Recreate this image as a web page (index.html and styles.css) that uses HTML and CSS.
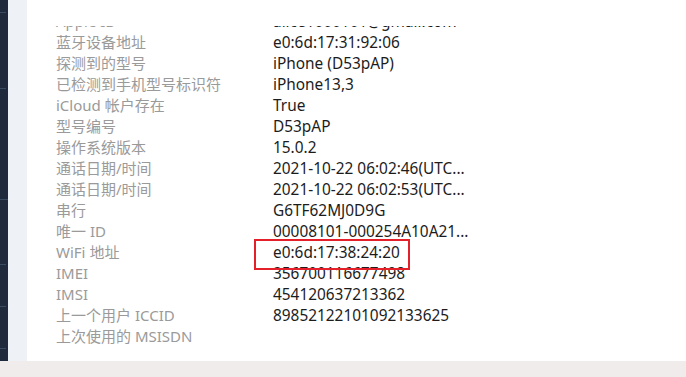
FILE: index.html
```html
<!DOCTYPE html>
<html lang="zh-CN">
<head>
<meta charset="utf-8">
<link rel="stylesheet" href="styles.css">
<title>设备信息</title>
</head>
<body>
<div class="app">
  <div class="main">
    <nav class="sidebar">
      <div class="nav-item h12"></div>
      <div class="nav-item h76"></div>
      <div class="nav-item h111 full"></div>
      <div class="nav-item h65"></div>
      <div class="nav-item h42"></div>
      <div class="nav-item h42"></div>
    </nav>
    <div class="gutter"></div>
    <section class="content">
      <div class="viewport">
        <dl class="props">
          <dt>Apple ID</dt><dd>alice1000101@gmail.com</dd>
          <dt>蓝牙设备地址</dt><dd>e0:6d:17:31:92:06</dd>
          <dt>探测到的型号</dt><dd>iPhone (D53pAP)</dd>
          <dt>已检测到手机型号标识符</dt><dd>iPhone13,3</dd>
          <dt>iCloud 帐户存在</dt><dd>True</dd>
          <dt>型号编号</dt><dd>D53pAP</dd>
          <dt>操作系统版本</dt><dd>15.0.2</dd>
          <dt>通话日期/时间</dt><dd>2021-10-22 06:02:46(UTC...</dd>
          <dt>通话日期/时间</dt><dd>2021-10-22 06:02:53(UTC...</dd>
          <dt>串行</dt><dd>G6TF62MJ0D9G</dd>
          <dt>唯一 ID</dt><dd>00008101-000254A10A21...</dd>
          <dt>WiFi 地址</dt><dd class="marked">e0:6d:17:38:24:20</dd>
          <dt>IMEI</dt><dd>356700116677498</dd>
          <dt>IMSI</dt><dd>454120637213362</dd>
          <dt>上一个用户 ICCID</dt><dd>89852122101092133625</dd>
          <dt>上次使用的 MSISDN</dt><dd></dd>
        </dl>
      </div>
    </section>
  </div>
  <div class="footer"></div>
</div>
</body>
</html>
```

FILE: styles.css
```css
* { box-sizing: border-box; }
html, body {
  margin: 0;
  padding: 0;
  width: 686px;
  height: 377px;
  overflow: hidden;
  background: #ffffff;
  font-family: "Noto Sans", "Noto Sans CJK SC", sans-serif;
}
.app {
  display: flex;
  flex-direction: column;
  height: 377px;
}
.main {
  display: flex;
  height: 361px;
}
.sidebar {
  width: 8px;
  background: #1f2a3c;
  display: flex;
  flex-direction: column;
}
.nav-item {
  border-bottom: 1px solid #3a4a62;
  margin-right: 2px;
}
.nav-item.full { margin-right: 0; }
.h12 { height: 13px; }
.h76 { height: 76px; }
.h111 { height: 111px; }
.h65 { height: 65px; }
.h42 { height: 42px; }
.gutter {
  width: 19px;
  background: #eef1f6;
}
.content {
  flex: 1;
  background: #ffffff;
  padding-top: 26px;
}
.viewport {
  height: 335px;
  overflow: hidden;
}
.props {
  margin: -15px 0 0 0;
  padding-left: 29px;
  display: grid;
  grid-template-columns: 217px 1fr;
  font-size: 15px;
  line-height: 21px;
}
.props dt {
  color: #9a9a9a;
  white-space: nowrap;
}
.props dd {
  margin: 0;
  color: #1c1c1c;
  white-space: nowrap;
  height: 21px;
  font-size: 15.4px;
}
.marked {
  position: relative;
}
.marked::after {
  content: "";
  position: absolute;
  left: -19px;
  top: -3px;
  width: 152px;
  height: 27px;
  border: 2px solid #e4202a;
}
.footer {
  height: 16px;
  background: #f0ecec;
}
```
